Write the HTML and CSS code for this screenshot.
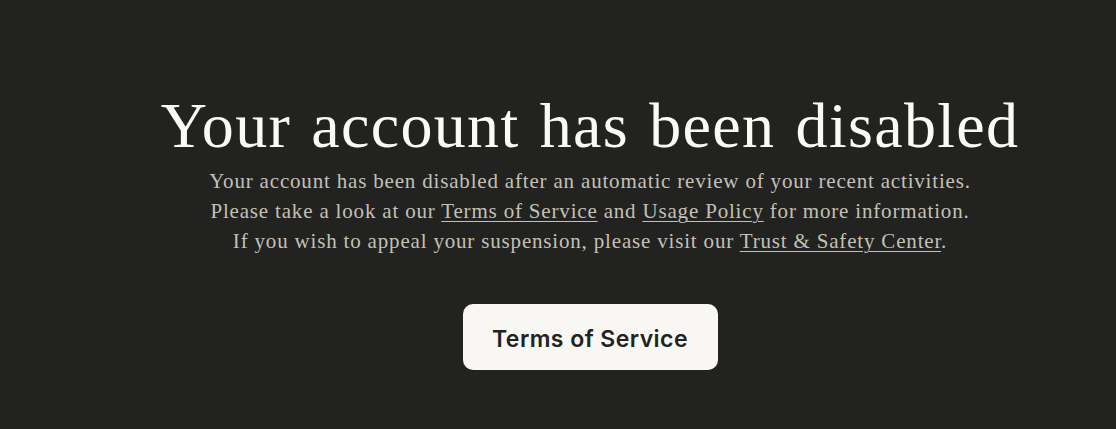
FILE: index.html
```html
<!DOCTYPE html>
<html lang="en">
<head>
<meta charset="utf-8">
<title>Account disabled</title>
<link rel="stylesheet" href="styles.css">
</head>
<body>
<main class="page">
  <section class="notice">
    <h1 class="title">Your account has been disabled</h1>
    <p class="desc">
      Your account has been disabled after an automatic review of your recent activities.<br>
      Please take a look at our <a href="#" class="link">Terms of Service</a> and <a href="#" class="link">Usage Policy</a> for more information.<br>
      If you wish to appeal your suspension, please visit our <a href="#" class="link">Trust &amp; Safety Center</a>.
    </p>
    <a href="#" class="btn">Terms of Service</a>
  </section>
</main>
</body>
</html>
```
FILE: styles.css
```css
html, body {
  margin: 0;
  padding: 0;
  background: #222220;
  height: 100%;
}
.page {
  min-height: 100%;
  padding-left: 64px;
  display: flex;
  justify-content: center;
}
.notice {
  display: flex;
  flex-direction: column;
  align-items: center;
  padding-top: 88px;
}
.title {
  margin: 0;
  font-family: "Liberation Serif", serif;
  font-weight: 400;
  font-size: 64px;
  line-height: 76px;
  letter-spacing: 1.3px;
  word-spacing: 3px;
  color: #faf9f5;
  white-space: nowrap;
}
.desc {
  margin: 2px 0 0;
  font-family: "Liberation Serif", serif;
  font-size: 21px;
  line-height: 30px;
  letter-spacing: 0.82px;
  color: #c3c1b7;
  text-align: center;
  white-space: nowrap;
}
.link {
  color: inherit;
  text-decoration: underline;
  text-underline-offset: 3px;
  text-decoration-thickness: 1px;
}
.btn {
  margin-top: 48px;
  display: inline-flex;
  align-items: center;
  justify-content: center;
  width: 255px;
  height: 66px;
  padding-top: 3px;
  box-sizing: border-box;
  background: #f8f7f3;
  border-radius: 10px;
  color: #222220;
  font-family: Inter, sans-serif;
  font-weight: 600;
  font-size: 23px;
  letter-spacing: 0.45px;
  text-decoration: none;
}
```
